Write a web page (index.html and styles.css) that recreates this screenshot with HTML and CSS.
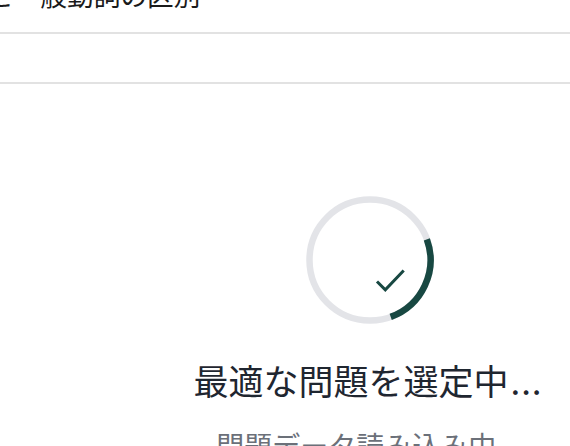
FILE: index.html
```html
<!DOCTYPE html>
<html lang="ja">
<head>
<meta charset="utf-8">
<title>問題を選定中</title>
<link rel="stylesheet" href="styles.css">
</head>
<body>
<div class="page">
  <header class="topbar">
    <div class="topbar-title">と一般動詞の区別</div>
  </header>
  <div class="subbar"></div>
  <main class="loading">
    <div class="spinner">
      <svg width="128" height="128" viewBox="0 0 128 128" aria-hidden="true">
        <circle cx="64" cy="64" r="60.5" fill="none" stroke="#e3e4e8" stroke-width="6.5"/>
        <path d="M120.85 43.31 A60.5 60.5 0 0 1 84.69 120.85" fill="none" stroke="#184842" stroke-width="6.5"/>
        <path d="M71 85.5 L79.3 93.8 L97.7 74.5" fill="none" stroke="#184842" stroke-width="3"/>
      </svg>
    </div>
    <h1 class="loading-title">最適な問題を選定中<span class="dots">...</span></h1>
    <p class="loading-sub">問題データ読み込み中...</p>
  </main>
</div>
</body>
</html>
```
FILE: styles.css
```css
html, body {
  margin: 0;
  padding: 0;
  background: #ffffff;
}
body {
  font-family: "Noto Sans CJK JP", "Noto Sans", sans-serif;
  overflow: hidden;
}
.page {
  width: 570px;
  height: 446px;
  overflow: hidden;
}
.topbar {
  height: 32px;
  border-bottom: 2px solid #e2e2e2;
  overflow: hidden;
}
.topbar-title {
  font-size: 26.7px;
  line-height: 26.7px;
  color: #1a1a1a;
  margin-top: -18px;
  margin-left: -13px;
  white-space: nowrap;
}
.subbar {
  height: 48px;
  border-bottom: 2px solid #e2e2e2;
}
.loading {
  display: flex;
  flex-direction: column;
  align-items: center;
  padding-top: 112px;
  padding-left: 166px;
}
.spinner {
  width: 128px;
  height: 128px;
  margin-left: 4px;
}
.spinner svg {
  display: block;
}
.loading-title {
  margin: 35px 0 0;
  font-size: 35px;
  line-height: 42px;
  font-weight: 400;
  color: #1f2630;
  white-space: nowrap;
}
.dots {
  letter-spacing: 1px;
  margin-left: 2px;
}
.loading-sub {
  margin: 26px 0 0;
  font-size: 28px;
  line-height: 36px;
  color: #6b7079;
  white-space: nowrap;
}
```
